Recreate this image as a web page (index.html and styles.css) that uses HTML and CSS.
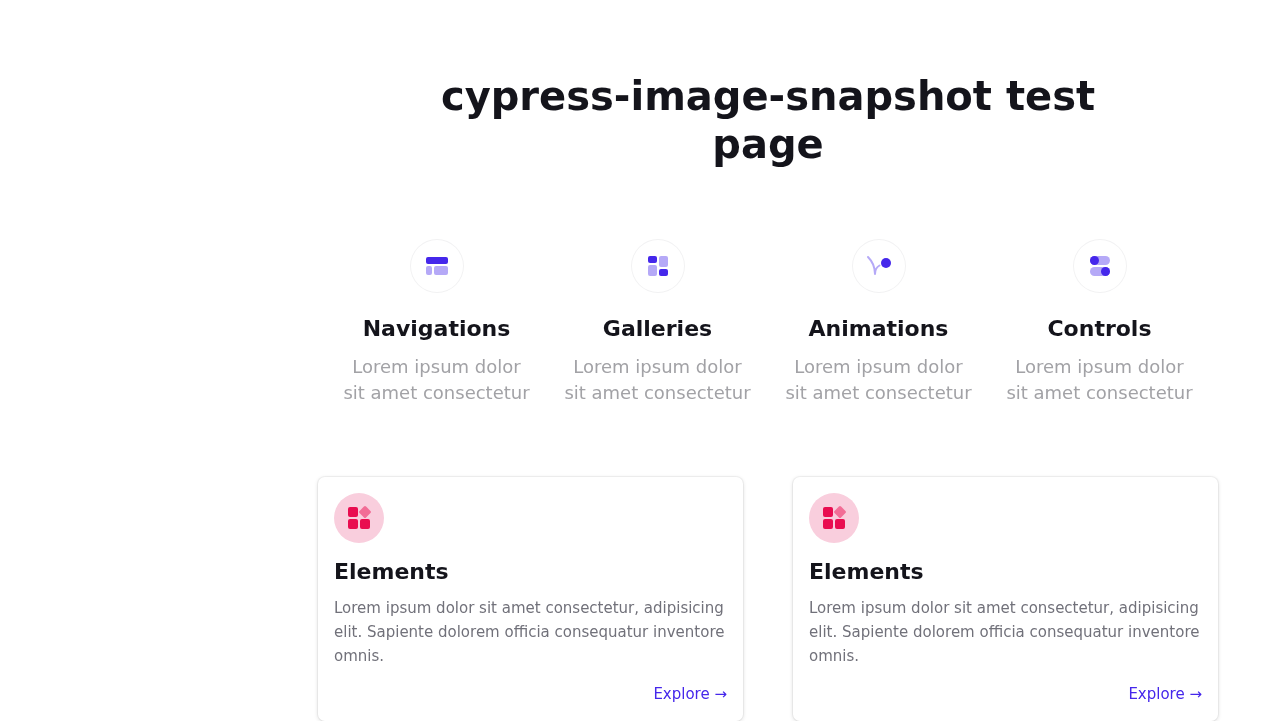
FILE: index.html
```html
<!DOCTYPE html>
<html lang="en">
<head>
<meta charset="utf-8">
<title>cypress-image-snapshot test page</title>
<link rel="stylesheet" href="styles.css">
</head>
<body>
<main class="page">
  <h1 class="title">cypress-image-snapshot test page</h1>
  <section class="features">
    <article class="feature">
      <div class="feature-icon">
        <svg width="54" height="54"><rect class="dark" x="16" y="18" width="22" height="7" rx="2"/><rect class="light" x="16" y="27" width="6" height="9" rx="2"/><rect class="light" x="24" y="27" width="14" height="9" rx="2"/></svg>
      </div>
      <h2 class="feature-title">Navigations</h2>
      <p class="feature-text">Lorem ipsum dolor sit amet consectetur</p>
    </article>
    <article class="feature">
      <div class="feature-icon">
        <svg width="54" height="54"><rect class="dark" x="17" y="17" width="9" height="7" rx="2"/><rect class="light" x="28" y="17" width="9" height="11" rx="2"/><rect class="light" x="17" y="26" width="9" height="11" rx="2"/><rect class="dark" x="28" y="30" width="9" height="7" rx="2"/></svg>
      </div>
      <h2 class="feature-title">Galleries</h2>
      <p class="feature-text">Lorem ipsum dolor sit amet consectetur</p>
    </article>
    <article class="feature">
      <div class="feature-icon">
        <svg width="54" height="54"><path class="trail" d="M16 18Q23 25 23 35Q23 29 27.500 26.500"/><circle class="dark" cx="34" cy="24" r="5"/></svg>
      </div>
      <h2 class="feature-title">Animations</h2>
      <p class="feature-text">Lorem ipsum dolor sit amet consectetur</p>
    </article>
    <article class="feature">
      <div class="feature-icon">
        <svg width="54" height="54"><rect class="light" x="17" y="17" width="20" height="9" rx="4.500"/><circle class="dark" cx="21.500" cy="21.500" r="4.500"/><rect class="light" x="17" y="28" width="20" height="9" rx="4.500"/><circle class="dark" cx="32.500" cy="32.500" r="4.500"/></svg>
      </div>
      <h2 class="feature-title">Controls</h2>
      <p class="feature-text">Lorem ipsum dolor sit amet consectetur</p>
    </article>
  </section>
  <section class="cards">
    <article class="card">
      <div class="card-icon">
        <svg width="50" height="50"><rect x="14" y="14" width="10" height="10" rx="2"/><rect x="14" y="26" width="10" height="10" rx="2"/><rect x="26" y="26" width="10" height="10" rx="2"/><rect class="diamond" x="26.400" y="14.400" width="9.200" height="9.200" rx="1.500" transform="rotate(45 31 19)"/></svg>
      </div>
      <h2 class="card-title">Elements</h2>
      <p class="card-text">Lorem ipsum dolor sit amet consectetur, adipisicing elit. Sapiente dolorem officia consequatur inventore omnis.</p>
      <a class="card-link" href="#">Explore →</a>
    </article>
    <article class="card">
      <div class="card-icon">
        <svg width="50" height="50"><rect x="14" y="14" width="10" height="10" rx="2"/><rect x="14" y="26" width="10" height="10" rx="2"/><rect x="26" y="26" width="10" height="10" rx="2"/><rect class="diamond" x="26.400" y="14.400" width="9.200" height="9.200" rx="1.500" transform="rotate(45 31 19)"/></svg>
      </div>
      <h2 class="card-title">Elements</h2>
      <p class="card-text">Lorem ipsum dolor sit amet consectetur, adipisicing elit. Sapiente dolorem officia consequatur inventore omnis.</p>
      <a class="card-link" href="#">Explore →</a>
    </article>
  </section>
</main>
</body>
</html>
```
FILE: styles.css
```css
* { box-sizing: border-box; margin: 0; padding: 0; }
html { overflow: hidden; }
body { background: #fff; color: #14141b; font-family: "DejaVu Sans", sans-serif; }
svg { display: block; }
.page { margin-left: 256px; padding-top: 72px; will-change: transform; }
.title { width: 720px; margin: 0 auto; font-size: 40px; line-height: 48px; text-align: center; }
.features { display: grid; grid-template-columns: repeat(4, 221px); justify-content: center; margin-top: 71px; }
.feature { display: flex; flex-direction: column; align-items: center; text-align: center; }
.feature-icon { width: 54px; height: 54px; border-radius: 50%; box-shadow: inset 0 0 0 1px #f2f2f3; }
.feature-title { margin-top: 20px; font-size: 22px; line-height: 32px; }
.feature-text { width: 190px; margin-top: 9px; color: #a2a2a6; font-size: 18px; line-height: 26px; }
.dark { fill: #4527eb; }
.light { fill: #b5a9f7; }
.trail { fill: none; stroke: #b5a9f7; stroke-width: 2; stroke-linecap: round; stroke-linejoin: round; }
.cards { display: grid; grid-template-columns: 425px 425px; gap: 50px; justify-content: center; margin-top: 71px; }
.card { display: flex; flex-direction: column; height: 244px; padding: 16px; border-radius: 7px; box-shadow: 0 0 1px 1px rgba(0,0,0,.05), 0 1px 4px rgba(0,0,0,.14); }
.card-icon { width: 50px; height: 50px; border-radius: 50%; background: #f9cedd; fill: #e90d50; }
.diamond { fill: #f26d96; }
.card-title { margin-top: 13px; font-size: 22px; line-height: 32px; }
.card-text { margin-top: 8px; color: #71717a; font-size: 15px; line-height: 24px; }
.card-link { align-self: flex-end; margin-top: 14px; color: #4527eb; font-size: 15px; line-height: 24px; text-decoration: none; }
```
